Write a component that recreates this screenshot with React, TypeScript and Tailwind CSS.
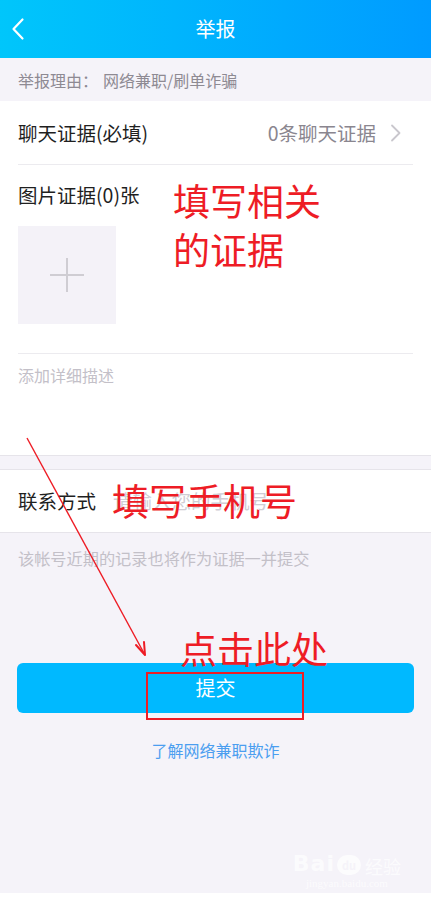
import React from "react";

export default function App() {
  return (
    <div className="relative w-[431px] h-[902px] bg-white overflow-hidden font-['Noto_Sans_CJK_SC','Noto_Sans',sans-serif]">
      <div className="h-[893px] bg-[#f5f3f9] flex flex-col">
        {/* Header */}
        <div className="h-[58px] shrink-0 bg-gradient-to-r from-[#00c6fb] to-[#009bff] grid grid-cols-[60px_1fr_60px] items-center">
          <div className="pl-[11px] flex items-center">
            <svg width="14" height="24" viewBox="0 0 14 24" fill="none">
              <path d="M11.5 2.5 L2.5 12 L11.5 21.5" stroke="white" strokeWidth="2.2" strokeLinecap="round" strokeLinejoin="round" />
            </svg>
          </div>
          <div className="text-center text-white text-[20px] leading-none">举报</div>
          <div />
        </div>

        {/* Reason strip */}
        <div className="h-[43px] shrink-0 px-[18px] flex items-center text-[16px] text-[#8e8a93]">
          <span>举报理由：</span>
          <span className="ml-[5px]">网络兼职/刷单诈骗</span>
        </div>

        {/* White section */}
        <div className="bg-white border-b border-[#e6e4ea]">
          <div className="mx-[18px] h-[64px] border-b border-[#ecebef] flex items-center justify-between">
            <span className="text-[19.5px] text-[#1f1f1f]">聊天证据(必填)</span>
            <div className="flex items-center gap-[14px]">
              <span className="text-[19.5px] text-[#8a868f]">0条聊天证据</span>
              <svg width="12" height="18" viewBox="0 0 12 18" fill="none" className="mr-[11px]">
                <path d="M2 1.5 L9.5 9 L2 16.5" stroke="#c9c7cd" strokeWidth="1.8" strokeLinecap="round" strokeLinejoin="round" />
              </svg>
            </div>
          </div>
          <div className="mx-[18px] pt-[17px] pb-[29px] border-b border-[#ecebef]">
            <div className="text-[19.5px] leading-[26px] text-[#1f1f1f]">图片证据(0)张</div>
            <div className="mt-[18px] w-[98px] h-[98px] bg-[#f4f2f8] flex items-center justify-center">
              <svg width="34" height="34" viewBox="0 0 34 34">
                <rect x="16" y="0" width="2" height="34" fill="#cfcdd3" />
                <rect x="0" y="16" width="34" height="2" fill="#cfcdd3" />
              </svg>
            </div>
          </div>
          <div className="h-[101px] px-[18px] pt-[9px]">
            <span className="text-[16px] leading-[24px] text-[#c3c0c8]">添加详细描述</span>
          </div>
        </div>

        <div className="h-[13px] shrink-0" />

        {/* Contact row */}
        <div className="h-[64px] bg-white border-y border-[#e6e4ea] px-[18px] flex items-center">
          <span className="text-[19.5px] text-[#1f1f1f] w-[95px]">联系方式</span>
          <span className="text-[19.5px] text-[#d0cdd4]">请输入您的手机号</span>
        </div>

        <div className="px-[18px] pt-[13px] text-[16.2px] leading-[24px] text-[#c3c0c8]">
          该帐号近期的记录也将作为证据一并提交
        </div>

        <div className="mt-[93px] mx-[17px] h-[50px] rounded-[6px] bg-[#00b9ff] flex items-center justify-center">
          <span className="text-white text-[20px]">提交</span>
        </div>

        <div className="mt-[25px] text-center text-[16px] leading-[24px] text-[#4b9ef0]">了解网络兼职欺诈</div>

        {/* watermark */}
        <div className="mt-auto mb-[2px] mr-[30px] self-end flex flex-col items-center text-white/70">
          <div className="flex items-end gap-[2px] leading-none">
            <span className="font-['DejaVu_Sans',sans-serif] font-bold text-[22px] tracking-[1px]">Bai</span>
            <span className="w-[24px] h-[20px] rounded-full bg-white/70 text-[#f5f3f9] text-[11px] font-bold flex items-center justify-center">du</span>
            <span className="text-[18px] ml-[2px]">经验</span>
          </div>
          <div className="text-[11px] leading-[16px] font-['Liberation_Serif',serif]">jingyan.baidu.com</div>
        </div>
      </div>

      {/* Annotations */}
      <div className="absolute left-[173px] top-[176px] text-[37px] leading-[49px] text-[#ee1c25]">
        填写相关
        <br />
        的证据
      </div>
      <div className="absolute left-[112px] top-[476px] text-[37px] leading-[49px] text-[#ee1c25]">填写手机号</div>
      <div className="absolute left-[180px] top-[624px] text-[37px] leading-[49px] text-[#ee1c25]">点击此处</div>
      <div className="absolute left-[146px] top-[672px] w-[158px] h-[48px] border-2 border-[#ee1c25]" />
      <svg className="absolute left-0 top-0 pointer-events-none" width="431" height="902" viewBox="0 0 431 902">
        <line x1="27" y1="438" x2="145" y2="655" stroke="#ee1c25" strokeWidth="1.4" />
        <path d="M145 655 L136 645 M145 655 L144 642" stroke="#ee1c25" strokeWidth="2" strokeLinecap="round" />
      </svg>
    </div>
  );
}
